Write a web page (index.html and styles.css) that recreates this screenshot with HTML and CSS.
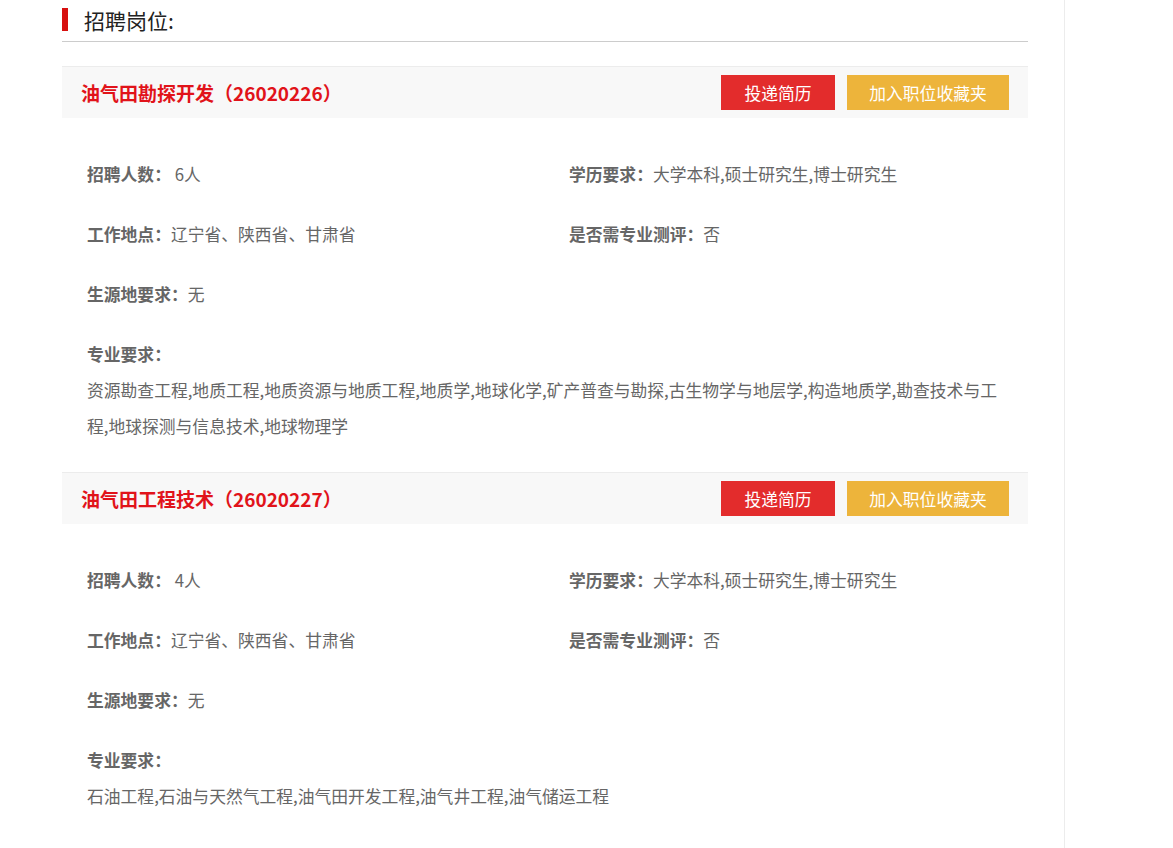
FILE: index.html
```html
<!DOCTYPE html>
<html lang="zh-CN">
<head>
<meta charset="utf-8">
<title>招聘岗位</title>
<link rel="stylesheet" href="styles.css">
</head>
<body>
<div class="page">
  <main class="main">
    <div class="section-head">
      <span class="mark"></span>
      <h2 class="section-title">招聘岗位:</h2>
    </div>

    <div class="job">
      <div class="job-head">
        <h3 class="job-title">油气田勘探开发（26020226）</h3>
        <div class="actions">
          <a class="btn btn-red">投递简历</a>
          <a class="btn btn-yellow">加入职位收藏夹</a>
        </div>
      </div>
      <div class="job-body">
        <div class="grid">
          <p class="item"><b>招聘人数：</b> 6人</p>
          <p class="item"><b>学历要求：</b>大学本科,硕士研究生,博士研究生</p>
          <p class="item"><b>工作地点：</b>辽宁省、陕西省、甘肃省</p>
          <p class="item"><b>是否需专业测评：</b>否</p>
          <p class="item"><b>生源地要求：</b>无</p>
        </div>
        <div class="major">
          <p class="item"><b>专业要求：</b></p>
          <p class="major-text">资源勘查工程,地质工程,地质资源与地质工程,地质学,地球化学,矿产普查与勘探,古生物学与地层学,构造地质学,勘查技术与工程,地球探测与信息技术,地球物理学</p>
        </div>
      </div>
    </div>

    <div class="job">
      <div class="job-head">
        <h3 class="job-title">油气田工程技术（26020227）</h3>
        <div class="actions">
          <a class="btn btn-red">投递简历</a>
          <a class="btn btn-yellow">加入职位收藏夹</a>
        </div>
      </div>
      <div class="job-body">
        <div class="grid">
          <p class="item"><b>招聘人数：</b> 4人</p>
          <p class="item"><b>学历要求：</b>大学本科,硕士研究生,博士研究生</p>
          <p class="item"><b>工作地点：</b>辽宁省、陕西省、甘肃省</p>
          <p class="item"><b>是否需专业测评：</b>否</p>
          <p class="item"><b>生源地要求：</b>无</p>
        </div>
        <div class="major">
          <p class="item"><b>专业要求：</b></p>
          <p class="major-text">石油工程,石油与天然气工程,油气田开发工程,油气井工程,油气储运工程</p>
        </div>
      </div>
    </div>
  </main>
  <aside class="side"></aside>
</div>
</body>
</html>
```

FILE: styles.css
```css
* { box-sizing: border-box; }
html, body { margin: 0; padding: 0; background: #fff; }
body {
  font-family: "Noto Sans CJK SC", "Microsoft YaHei", sans-serif;
  color: #666;
  font-size: 16.8px;
}
.page {
  display: flex;
  min-height: 848px;
  padding-left: 62px;
}
.main {
  width: 966px;
  flex: none;
}
.side {
  margin-left: 36px;
  border-left: 1px solid #ececec;
  flex: 1;
}
.section-head {
  display: flex;
  align-items: center;
  height: 42px;
  border-bottom: 1px solid #cccccc;
  margin-bottom: 24px;
}
.mark {
  width: 6px;
  height: 23px;
  background: #d7100f;
  margin-right: 16px;
  margin-top: -2px;
}
.section-title {
  margin: 0;
  font-size: 21px;
  font-weight: normal;
  color: #222;
  line-height: 24px;
  margin-top: -2px;
}
.job-head {
  display: flex;
  align-items: center;
  justify-content: space-between;
  height: 52px;
  background: #f8f8f8;
  border-top: 1px solid #ececec;
  padding: 0 19px;
}
.job-title {
  margin: 0;
  font-size: 19px;
  font-weight: bold;
  color: #e1131a;
  line-height: 24px;
}
.actions {
  display: flex;
  gap: 12px;
}
.btn {
  display: flex;
  align-items: center;
  justify-content: center;
  height: 35px;
  font-size: 16.8px;
  color: #fff;
  cursor: pointer;
}
.btn-red { width: 114px; background: #e32c2c; }
.btn-yellow { width: 162px; background: #edb43b; }
.job-body {
  padding: 38px 25px 28px;
}
.grid {
  display: grid;
  grid-template-columns: 482px 1fr;
  row-gap: 24px;
}
.item {
  margin: 0;
  line-height: 36px;
  white-space: nowrap;
}
.item b { font-weight: bold; color: #666; }
.major { margin-top: 24px; }
.major-text {
  margin: 0;
  line-height: 36px;
}
```
